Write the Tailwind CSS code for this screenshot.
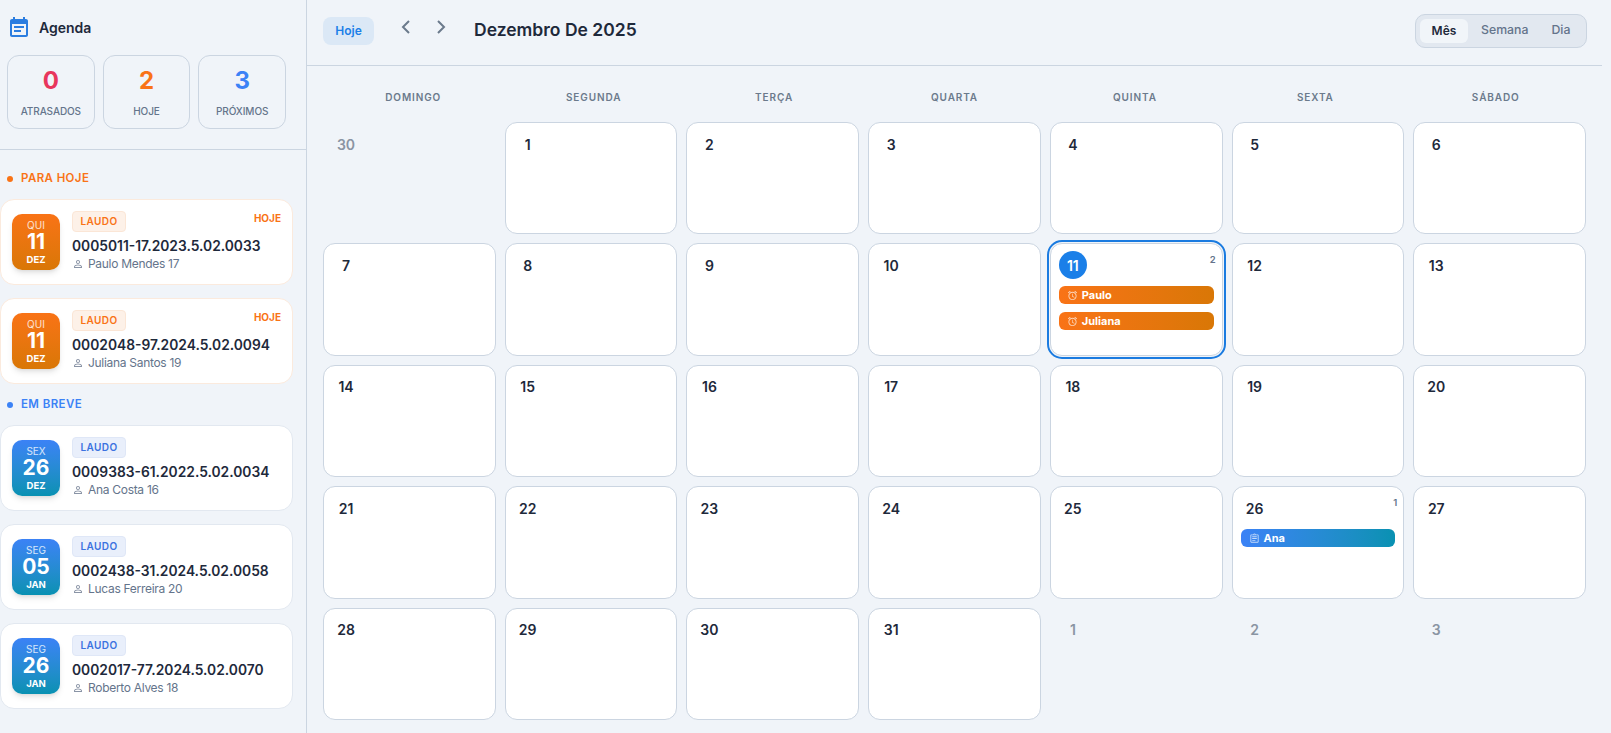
<!DOCTYPE html>
<html lang="pt-BR">
<head>
  <meta charset="UTF-8" />
  <title>Agenda</title>
  <script src="https://cdn.jsdelivr.net/npm/@tailwindcss/browser@4"></script>
</head>
<body class="bg-[#f0f4f9] font-['Inter',sans-serif] text-[#1e293b] h-[733px] overflow-hidden flex">

  <!-- Barra lateral -->
  <aside class="w-[307px] shrink-0 h-[733px] border-r border-[#cbd5e1] flex flex-col">
    <div class="border-b border-[#cbd5e1] h-[150px] pl-[7px] pr-5 shrink-0">
      <div class="flex items-center gap-2 h-[55px]">
        <svg class="w-6 h-6 text-[#2b7de0]" viewBox="0 0 24 24" fill="currentColor"><path d="M17 10H7v2h10v-2zm2-7h-1V1h-2v2H8V1H6v2H5c-1.11 0-1.99.9-1.99 2L3 19c0 1.1.89 2 2 2h14c1.1 0 2-.9 2-2V5c0-1.1-.9-2-2-2zm0 16H5V8h14v11zm-5-5H7v2h7v-2z"/></svg>
        <span class="text-[14px] font-semibold">Agenda</span>
      </div>
      <div class="grid grid-cols-3 gap-2 w-[279px]">
        <div class="h-[74px] rounded-xl border border-[#cbd5e1] flex flex-col items-center pt-[9px]">
          <span class="text-[24px] leading-8 font-bold text-[#e8365d]">0</span>
          <span class="text-[10px] leading-4 mt-[6px] font-medium tracking-[-0.1px] text-[#64748b]">ATRASADOS</span>
        </div>
        <div class="h-[74px] rounded-xl border border-[#cbd5e1] flex flex-col items-center pt-[9px]">
          <span class="text-[24px] leading-8 font-bold text-[#f97316]">2</span>
          <span class="text-[10px] leading-4 mt-[6px] font-medium tracking-[-0.1px] text-[#64748b]">HOJE</span>
        </div>
        <div class="h-[74px] rounded-xl border border-[#cbd5e1] flex flex-col items-center pt-[9px]">
          <span class="text-[24px] leading-8 font-bold text-[#3b82f6]">3</span>
          <span class="text-[10px] leading-4 mt-[6px] font-medium tracking-[-0.1px] text-[#64748b]">PRÓXIMOS</span>
        </div>
      </div>
    </div>
    <div class="pr-[13px] flex flex-col">
      <div class="flex items-center gap-2 pl-[7px] h-[49px] pt-[8px] text-[11.5px] font-semibold tracking-[0.4px] text-[#f97316]">
        <span class="w-[6px] h-[6px] rounded-full bg-[#f97316]"></span>PARA HOJE
      </div>
      <div id="today-list" class="flex flex-col gap-[13px]"></div>
      <div class="flex items-center gap-2 pl-[7px] h-[41px] text-[11.5px] font-semibold tracking-[0.4px] text-[#3b82f6]">
        <span class="w-[6px] h-[6px] rounded-full bg-[#3b82f6]"></span>EM BREVE
      </div>
      <div id="soon-list" class="flex flex-col gap-[13px]"></div>
    </div>
  </aside>

  <!-- Calendario -->
  <main class="w-[1295px] h-[733px] flex flex-col">
    <header class="h-[66px] shrink-0 border-b border-[#cbd5e1] flex items-center pl-4 pr-[15px] pb-[4px]">
      <button class="h-7 w-[51px] rounded-lg bg-[#dbe8f6] text-[#1a7fe8] text-[12px] font-semibold">Hoje</button>
      <button class="ml-[24px] w-4 h-4 -mt-2 text-[#6b7a8c]">
        <svg viewBox="0 0 16 16" fill="none" stroke="currentColor" stroke-width="2"><path d="M11 2 5 8l6 6"/></svg>
      </button>
      <button class="ml-[19px] w-4 h-4 -mt-2 text-[#6b7a8c]">
        <svg viewBox="0 0 16 16" fill="none" stroke="currentColor" stroke-width="2"><path d="M5 2 11 8 5 14"/></svg>
      </button>
      <h1 class="ml-[25px] text-[17.5px] font-semibold">Dezembro De 2025</h1>
      <div class="ml-auto h-[34px] w-[172px] rounded-[10px] bg-[#e2e8f0] border border-[#cbd5e1] flex items-center pl-1 text-[12.3px] font-medium text-[#64748b]">
        <span class="w-12 h-6 rounded-md bg-[#f1f5f9] text-[#1e293b] text-[12px] font-semibold flex items-center justify-center">Mês</span>
        <span class="ml-[13px]">Semana</span>
        <span class="ml-[23px]">Dia</span>
      </div>
    </header>

    <div class="grid grid-cols-7 px-4 h-[56px] shrink-0 items-center pt-[6px] text-[10px] font-semibold tracking-[0.9px] text-[#6b7a8c] text-center">
      <div>DOMINGO</div><div>SEGUNDA</div><div>TERÇA</div><div>QUARTA</div><div>QUINTA</div><div>SEXTA</div><div>SÁBADO</div>
    </div>
    <div id="month-grid" class="grid grid-cols-7 grid-rows-5 gap-[9px] px-4 h-[598px]"></div>
  </main>

  <script>
    const personIcon = `<svg class="w-3 h-3 text-[#8a94a6] shrink-0" viewBox="0 0 24 24" fill="currentColor"><path d="M12 5.900c1.160 0 2.100.940 2.100 2.100s-.940 2.100-2.100 2.100S9.900 9.160 9.900 8s.940-2.100 2.100-2.100m0 9c2.970 0 6.100 1.460 6.100 2.100v1.100H5.900V17c0-.640 3.130-2.100 6.100-2.100M12 4C9.790 4 8 5.790 8 8s1.790 4 4 4 4-1.790 4-4-1.790-4-4-4zm0 9c-2.670 0-8 1.340-8 4v3h16v-3c0-2.660-5.330-4-8-4z"/></svg>`;
    const alarmIcon = `<svg class="w-[11px] h-[11px] text-white/70 shrink-0" viewBox="0 0 24 24" fill="currentColor"><path d="M22 5.720l-4.600-3.860-1.290 1.530 4.600 3.860L22 5.720zM7.880 3.390L6.600 1.860 2 5.710l1.290 1.530 4.590-3.850zM12.500 8H11v6l4.750 2.850.750-1.230-4-2.370V8zM12 4c-4.970 0-9 4.030-9 9s4.020 9 9 9c4.970 0 9-4.030 9-9s-4.030-9-9-9zm0 16c-3.870 0-7-3.130-7-7s3.130-7 7-7 7 3.130 7 7-3.130 7-7 7z"/></svg>`;
    const taskIcon = `<svg class="w-[11px] h-[11px] text-white/70 shrink-0" viewBox="0 0 24 24" fill="currentColor"><path d="M7 15h7v2H7zm0-4h10v2H7zm0-4h10v2H7zm12-4h-4.180C14.400 1.840 13.300 1 12 1c-1.300 0-2.400.840-2.820 2H5c-1.100 0-2 .900-2 2v14c0 1.100.900 2 2 2h14c1.100 0 2-.900 2-2V5c0-1.100-.900-2-2-2zm-7-.250c.410 0 .750.340.750.750s-.340.750-.750.750-.750-.340-.750-.750.340-.750.750-.750zM19 19H5V5h14v14z"/></svg>`;

    const todayItems = [
      { wd: "QUI", d: "11", m: "DEZ", num: "0005011-17.2023.5.02.0033", name: "Paulo Mendes 17" },
      { wd: "QUI", d: "11", m: "DEZ", num: "0002048-97.2024.5.02.0094", name: "Juliana Santos 19" }
    ];
    const soonItems = [
      { wd: "SEX", d: "26", m: "DEZ", num: "0009383-61.2022.5.02.0034", name: "Ana Costa 16" },
      { wd: "SEG", d: "05", m: "JAN", num: "0002438-31.2024.5.02.0058", name: "Lucas Ferreira 20" },
      { wd: "SEG", d: "26", m: "JAN", num: "0002017-77.2024.5.02.0070", name: "Roberto Alves 18" }
    ];

    function itemCard(item, today) {
      const border = today ? "border-[#fbeadd]" : "border-[#e2e8f0]";
      const box = today ? "from-[#f97316] to-[#d97706]" : "from-[#3b82f6] to-[#0891b2]";
      const badge = today ? "bg-[#fdf1e8] border-[#fbe6d6] text-[#f97316]" : "bg-[#e9effb] border-[#dfe7f7] text-[#3b72e0]";
      return `
        <div class="relative h-[86px] bg-white rounded-[14px] border ${border} flex pl-[11px] pt-[11px] gap-3">
          <div class="w-12 h-14 mt-[3px] rounded-[10px] bg-gradient-to-b ${box} shadow-md text-white flex flex-col items-center shrink-0">
            <span class="text-[10px] leading-3 mt-[5px] text-white/80">${item.wd}</span>
            <span class="text-[21px] leading-[22px] font-bold">${item.d}</span>
            <span class="text-[9.5px] leading-3 mt-[1px] font-bold">${item.m}</span>
          </div>
          <div class="min-w-0">
            <span class="flex items-center justify-center w-[54px] h-[21px] rounded border ${badge} text-[10px] font-semibold tracking-[0.4px]">LAUDO</span>
            <div class="text-[13.8px] leading-5 mt-[4px] font-semibold whitespace-nowrap">${item.num}</div>
            <div class="flex items-center gap-[4px] text-[12px] leading-4 tracking-[-0.3px] text-[#64748b]">${personIcon}${item.name}</div>
          </div>
          ${today ? `<span class="absolute right-[11px] top-[11px] text-[10px] font-bold text-[#f97316]">HOJE</span>` : ""}
        </div>`;
    }
    document.getElementById("today-list").innerHTML = todayItems.map(i => itemCard(i, true)).join("");
    document.getElementById("soon-list").innerHTML = soonItems.map(i => itemCard(i, false)).join("");

    // Eventos por dia do mes
    const orange = "from-[#f97316] to-[#d97706]";
    const blue = "from-[#3b82f6] to-[#0891b2]";
    const events = {
      11: [{ label: "Paulo", color: orange, icon: alarmIcon }, { label: "Juliana", color: orange, icon: alarmIcon }],
      26: [{ label: "Ana", color: blue, icon: taskIcon }]
    };

    const days = [{ n: 30, out: true }];
    for (let n = 1; n <= 31; n++) days.push({ n });
    for (let n = 1; n <= 3; n++) days.push({ n, out: true });

    document.getElementById("month-grid").innerHTML = days.map(day => {
      if (day.out) {
        return `<div class="pl-[9px] pt-[8px]"><div class="w-7 h-7 flex items-center justify-center text-[14px] font-semibold text-[#8a94a3]">${day.n}</div></div>`;
      }
      const evs = events[day.n] || [];
      const isToday = day.n === 11;
      return `
        <div class="relative min-w-0 bg-white rounded-xl border border-[#cbd5e1] p-2 pt-[7px] ${isToday ? "outline-2 outline-offset-1 outline-[#1a7be0]" : ""}">
          <div class="w-7 h-7 flex items-center justify-center rounded-full text-[14px] font-semibold ${isToday ? "bg-[#1a7fe8] text-white" : ""}">${day.n}</div>
          ${evs.length ? `<span class="absolute right-[6px] top-[9px] text-[9.5px] font-semibold text-[#64748b]">${evs.length}</span>` : ""}
          <div class="flex flex-col gap-2 mt-[7px]">
            ${evs.map(e => `<div class="h-[18px] rounded-md bg-gradient-to-r ${e.color} flex items-center gap-[4px] pl-2 text-[11px] font-bold text-white">${e.icon}${e.label}</div>`).join("")}
          </div>
        </div>`;
    }).join("");
  </script>
</body>
</html>
